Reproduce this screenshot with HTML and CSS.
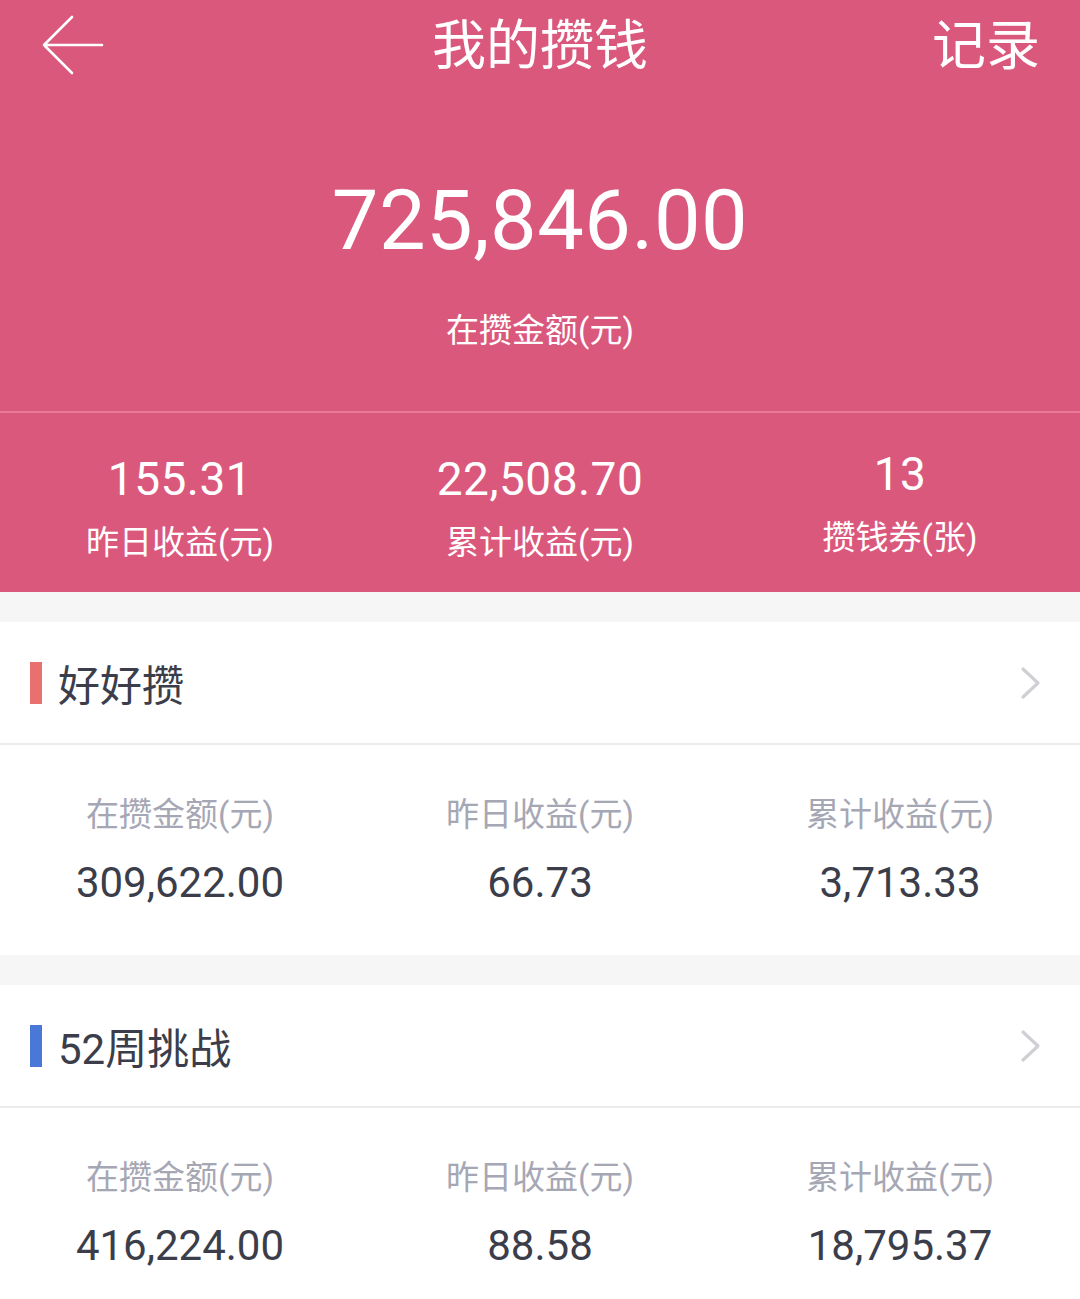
FILE: index.html
```html
<!DOCTYPE html>
<html lang="zh-CN">
<head>
    <meta charset="UTF-8">
    <meta name="viewport" content="width=device-width, initial-scale=1.0">
    <title>我的攒钱</title>
    <link rel="stylesheet" href="styles.css">
</head>
<body>
    <!-- Pink summary header -->
    <div class="hero">
        <div class="topbar">
            <svg class="back" width="62" height="60" viewBox="0 0 62 60">
                <path d="M30 2 L2 30 L30 58 M2 30 L60 30" fill="none" stroke="#fff" stroke-width="2.6" stroke-linecap="round" stroke-linejoin="round"/>
            </svg>
            <div class="title">我的攒钱</div>
            <div class="record">记录</div>
        </div>

        <div class="total">
            <div class="total-value">725,846.00</div>
            <div class="total-label">在攒金额(元)</div>
        </div>

        <div class="summary">
            <div class="summary-item">
                <div class="summary-value">155.31</div>
                <div class="summary-label">昨日收益(元)</div>
            </div>
            <div class="summary-item">
                <div class="summary-value">22,508.70</div>
                <div class="summary-label">累计收益(元)</div>
            </div>
            <div class="summary-item summary-item--up">
                <div class="summary-value">13</div>
                <div class="summary-label">攒钱券(张)</div>
            </div>
        </div>
    </div>

    <!-- Products -->
    <div class="card">
        <div class="card-head">
            <span class="mark mark--red"></span>
            <span class="card-title">好好攒</span>
            <svg class="chevron" width="22" height="34" viewBox="0 0 22 34">
                <path d="M3 3 L18 17 L3 31" fill="none" stroke="#cfcfd4" stroke-width="3.2" stroke-linecap="round" stroke-linejoin="round"/>
            </svg>
        </div>
        <div class="card-stats">
            <div class="stat">
                <div class="stat-label">在攒金额(元)</div>
                <div class="stat-value">309,622.00</div>
            </div>
            <div class="stat">
                <div class="stat-label">昨日收益(元)</div>
                <div class="stat-value">66.73</div>
            </div>
            <div class="stat">
                <div class="stat-label">累计收益(元)</div>
                <div class="stat-value">3,713.33</div>
            </div>
        </div>
    </div>

    <div class="card">
        <div class="card-head">
            <span class="mark mark--blue"></span>
            <span class="card-title">52周挑战</span>
            <svg class="chevron" width="22" height="34" viewBox="0 0 22 34">
                <path d="M3 3 L18 17 L3 31" fill="none" stroke="#cfcfd4" stroke-width="3.2" stroke-linecap="round" stroke-linejoin="round"/>
            </svg>
        </div>
        <div class="card-stats">
            <div class="stat">
                <div class="stat-label">在攒金额(元)</div>
                <div class="stat-value">416,224.00</div>
            </div>
            <div class="stat">
                <div class="stat-label">昨日收益(元)</div>
                <div class="stat-value">88.58</div>
            </div>
            <div class="stat">
                <div class="stat-label">累计收益(元)</div>
                <div class="stat-value">18,795.37</div>
            </div>
        </div>
    </div>
</body>
</html>
```

FILE: styles.css
```css
/* Reset */
body, html {
    margin: 0;
    padding: 0;
}

body {
    background-color: #f6f6f7;
    font-family: Roboto, "Noto Sans CJK SC", sans-serif;
    color: #3b3e4a;
    height: 1299px;
    overflow: hidden;
}

/* Pink header block */
.hero {
    background-color: #db587d;
    color: #fff;
}

.topbar {
    height: 92px;
    display: flex;
    align-items: center;
    justify-content: space-between;
    padding: 0 42px;
    position: relative;
}

.back {
    display: block;
    margin-top: -2px;
}

.title {
    position: absolute;
    left: 0;
    right: 0;
    top: 1px;
    text-align: center;
    font-size: 54px;
    line-height: 92px;
}

.record {
    font-size: 54px;
    line-height: 92px;
    margin-right: -2px;
    margin-top: 2px;
}

.total {
    text-align: center;
    padding-top: 84px;
    height: 321px;
    box-sizing: border-box;
    border-bottom: 2px solid #e87a98;
}

.total-value {
    font-size: 83px;
    line-height: 90px;
    letter-spacing: 0.5px;
}

.total-label {
    font-size: 33px;
    line-height: 40px;
    margin-top: 45px;
}

.summary {
    display: grid;
    grid-template-columns: repeat(3, 1fr);
    height: 179px;
    padding-top: 38px;
    box-sizing: border-box;
}

.summary-item {
    text-align: center;
}

.summary-item--up {
    margin-top: -5px;
}

.summary-value {
    font-size: 46px;
    line-height: 56px;
    letter-spacing: 0.5px;
}

.summary-label {
    font-size: 33px;
    line-height: 40px;
    margin-top: 16px;
}

/* White product cards */
.card {
    background-color: #fff;
    margin-top: 30px;
}

.card-head {
    height: 123px;
    display: flex;
    align-items: center;
    padding: 0 38px 0 30px;
    border-bottom: 2px solid #ededf0;
    box-sizing: border-box;
}

.mark {
    width: 12px;
    height: 42px;
    margin-right: 16px;
}

.mark--red {
    background-color: #e8706f;
}

.mark--blue {
    background-color: #4a78d8;
}

.card-title {
    font-size: 42px;
    flex: 1;
    color: #3b3e4a;
}

.chevron {
    display: block;
}

.card-stats {
    display: grid;
    grid-template-columns: repeat(3, 1fr);
    height: 210px;
    padding-top: 50px;
    box-sizing: border-box;
}

.stat {
    text-align: center;
}

.stat-label {
    font-size: 33px;
    line-height: 40px;
    color: #a6a7b4;
}

.stat-value {
    font-size: 42px;
    line-height: 50px;
    margin-top: 23px;
    color: #3b3e4a;
}
```
